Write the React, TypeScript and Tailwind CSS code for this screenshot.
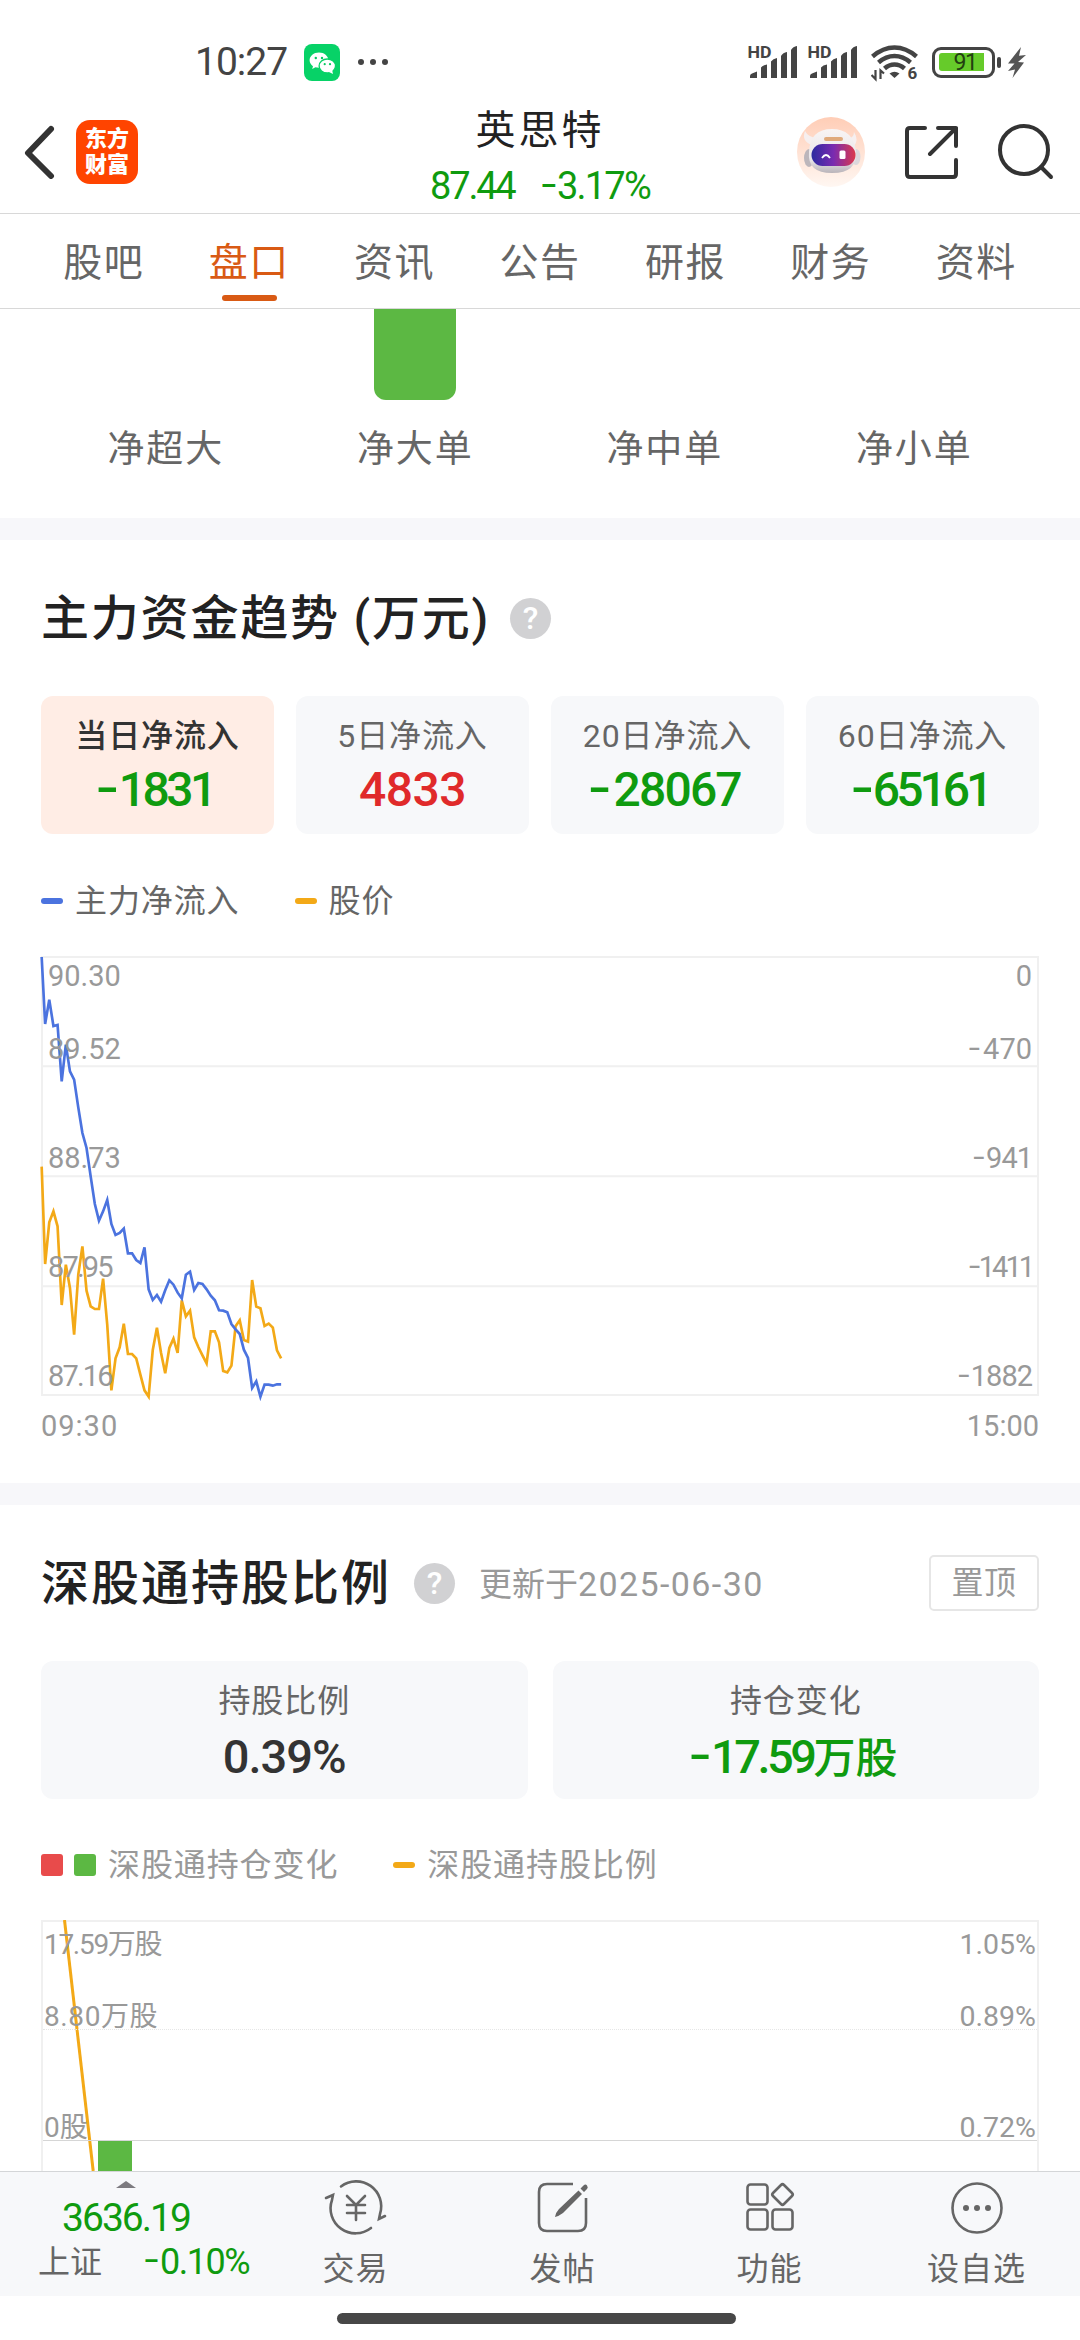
import React from "react";

const TABS = ["股吧", "盘口", "资讯", "公告", "研报", "财务", "资料"];

const ORDERS = [
  { label: "净超大", bar: false },
  { label: "净大单", bar: true },
  { label: "净中单", bar: false },
  { label: "净小单", bar: false },
];

const FLOWS = [
  { label: "当日净流入", value: "-1831", color: "text-[#0f9b0f] tracking-[-3.5px]", active: true },
  { label: "5日净流入", value: "4833", color: "text-[#e02a2a] tracking-[-0.5px]" },
  { label: "20日净流入", value: "-28067", color: "text-[#0f9b0f] tracking-[-1.8px]" },
  { label: "60日净流入", value: "-65161", color: "text-[#0f9b0f] tracking-[-4px]" },
];

// one sample per trading minute, in thirds of a pixel
const INFLOW = [
  77, 278, 205, 284, 281, 450, 340, 420, 445, 528, 605, 650, 735, 818, 868, 840, 806, 878, 911, 905,
  892, 966, 966, 986, 995, 948, 1074, 1106, 1091, 1111, 1077, 1047, 1060, 1084, 1101, 1030, 1021,
  1076, 1055, 1058, 1074, 1093, 1107, 1137, 1138, 1143, 1178, 1194, 1208, 1255, 1280, 1370, 1350,
  1396, 1360, 1360, 1363, 1359, 1359,
];
const PRICE = [
  706, 998, 873, 840, 885, 1121, 1000, 1070, 1210, 1030, 945, 1078, 1125, 1133, 1133, 1042, 1180,
  1377, 1281, 1248, 1177, 1268, 1268, 1281, 1330, 1377, 1396, 1256, 1189, 1265, 1326, 1250, 1222,
  1265, 1107, 1155, 1138, 1218, 1247, 1272, 1296, 1200, 1200, 1233, 1319, 1323, 1303, 1185, 1167,
  1226, 1231, 1046, 1126, 1131, 1184, 1177, 1189, 1257, 1281,
];

const toPoints = (values: number[]) =>
  values.map((v, i) => `${Math.max(2, i * 12.42).toFixed(1)},${v}`).join(" ");

// negative numbers get a wider, slightly raised minus
function Num({ value }: { value: string }) {
  if (!value.startsWith("-")) return <>{value}</>;
  return (
    <>
      <span className="mr-[0.1em] inline-block origin-right -translate-y-[0.05em] scale-x-[1.4]">-</span>
      {value.slice(1)}
    </>
  );
}

function Signal() {
  return (
    <svg width="54" height="44" viewBox="-2 -5 54 44" fill="#444">
      <text x="-0.5" y="13" fontSize="16" fontWeight="700" textLength="24" lengthAdjust="spacingAndGlyphs">
        HD
      </text>
      <path d="M2 33v-2q0-2 2-2.500l5-2v6.500ZM13 33V22.500q2-2.500 6-3v13.500ZM23 33V16.500q2-3 6-3.500v20ZM33 33V11q2-3.500 6-4v26ZM43 33V5q2-3.500 6-4v32Z" />
    </svg>
  );
}

function StatusBar() {
  return (
    <div className="flex h-[100px] items-center pt-6 pl-[195px] text-[#444]">
      <span className="w-[109px] text-[39px] leading-[40px] tracking-[-1px]">10:27</span>
      <svg width="36" height="37" viewBox="0 0 36 37">
        <rect width="36" height="37" rx="8" fill="#07d267" />
        <path d="M15 8.500C9.800 8.500 5.600 12 5.600 16.300c0 2.400 1.300 4.500 3.400 5.900L8.200 25l3.200-1.700c1.100.3 2.300.5 3.600.5 5.200 0 9.400-3.400 9.400-7.600S20.200 8.500 15 8.500Z" fill="#fff" />
        <ellipse cx="23.300" cy="22" rx="8.200" ry="7" fill="#fff" stroke="#07d267" strokeWidth="1.300" />
        <path d="m25 28 4 2-.8-3.500Z" fill="#fff" />
        <g fill="#07c862">
          <circle cx="11.800" cy="14" r="1.200" />
          <circle cx="18" cy="14" r="1.200" />
          <circle cx="20.700" cy="20.200" r="1.100" />
          <circle cx="26" cy="20.200" r="1.100" />
        </g>
      </svg>
      <div className="ml-[18px] flex gap-[6px]">
        <i className="size-[6px] rounded-full bg-[#444]" />
        <i className="size-[6px] rounded-full bg-[#444]" />
        <i className="size-[6px] rounded-full bg-[#444]" />
      </div>
      <div className="ml-[358px] flex items-center gap-[6px]">
        <Signal />
        <Signal />
        <svg width="52" height="44" viewBox="0 -4 52 44" className="ml-[5px]" fill="none" stroke="#444" strokeWidth="4.500">
          <path d="M1.500 12.500Q12 3.500 23.500 3.500T45.500 12.500" />
          <path d="M7.500 18.500Q15 12 23.500 12T39.500 18.500" />
          <path d="M13.500 24.500Q18 20.500 23.500 20.500T33.500 24.500" />
          <path d="M18.500 29.500Q23.500 26 28.500 29.500L23.500 34Z" fill="#444" stroke="none" />
          <path d="M4.500 26v9L.5 31M9.500 35v-8.500l3.500 3" strokeWidth="2.200" />
          <text x="36.500" y="35" fontSize="17" fontWeight="700" fill="#444" stroke="none">6</text>
        </svg>
        <div className="ml-[3px] flex items-center">
          <div className="h-[31px] w-[63px] rounded-[9px] border-[3px] border-[#444] p-[3.500px]">
            <div className="flex h-full w-[45px] items-center justify-center rounded-l-[3px] bg-[#66cb2a] pl-2 text-[23px] leading-none tracking-[-1.500px] text-[#234011]">
              91
            </div>
          </div>
          <i className="ml-[2px] h-[11px] w-[4px] rounded-[2px] bg-[#444]" />
        </div>
      </div>
      <svg width="18" height="31" viewBox="0 0 18 31" className="ml-[7px]" fill="#555">
        <path d="M13 0 0 16.500h6.500L0 24l7-1.500L4.500 31 16 15.500l-6-.5L18 8l-7 .8Z" />
      </svg>
    </div>
  );
}

function Robot() {
  return (
    <svg width="68" height="70" viewBox="0 0 68 70">
      <defs>
        <linearGradient id="halo" x1="0" y1="0" x2="0" y2="1">
          <stop offset="0" stopColor="#ffcdb6" />
          <stop offset="1" stopColor="#fff7f2" />
        </linearGradient>
        <linearGradient id="visor">
          <stop offset="0" stopColor="#2c2aa0" />
          <stop offset="0.500" stopColor="#7a2bb0" />
          <stop offset="1" stopColor="#dc3a4c" />
        </linearGradient>
        <linearGradient id="shell" x1="0" y1="0" x2="0" y2="1">
          <stop offset="0" stopColor="#f8f4f4" />
          <stop offset="0.700" stopColor="#e9e5e8" />
          <stop offset="1" stopColor="#b9b3b9" />
        </linearGradient>
      </defs>
      <ellipse cx="34" cy="35" rx="34" ry="35" fill="url(#halo)" />
      <path d="M15 28Q4 24 8 14q3 6 12 7ZM50 22q7-1 7-7 5 8 0 14Z" fill="#f6efef" />
      <ellipse cx="12" cy="41" rx="5" ry="9" fill="#bcb6bb" />
      <ellipse cx="59" cy="40" rx="4.500" ry="8" fill="#dcd8dc" />
      <path d="M12 35Q13 12 35 12q21 0 24 22 2 22-24 22Q10 56 12 35Z" fill="url(#shell)" />
      <rect x="27" y="20" width="19" height="4" rx="2" fill="#e0aa7c" />
      <rect x="14.500" y="27" width="44" height="22" rx="11" fill="url(#visor)" />
      <path d="M25 41q4-6 8 0" fill="none" stroke="#fff" strokeWidth="1.800" />
      <rect x="42.500" y="33.500" width="6" height="8.500" rx="1.500" fill="#fff" />
    </svg>
  );
}

function Header() {
  return (
    <div className="flex h-[114px] items-center border-b-[1px] border-[#d8d8d8] pr-[26px] pl-[23px]">
      <div className="mb-[9px] flex w-[260px] items-center">
        <svg width="32" height="54" viewBox="0 0 32 54" fill="none" stroke="#333" strokeWidth="6" strokeLinecap="round" strokeLinejoin="round">
          <path d="M28 4 5 28l23 23" />
        </svg>
        <div className="ml-[21px] flex h-[64px] w-[62px] flex-col items-center justify-center rounded-[14px] bg-[#ff4400] text-[22px] leading-[26px] font-black text-white">
          <span>东方</span>
          <span>财富</span>
        </div>
      </div>
      <div className="flex flex-1 flex-col items-center">
        <div className="mt-[3px] text-[40px] leading-[54px] tracking-[3px] text-[#222]">英思特</div>
        <div className="mt-[2px] flex gap-[30px] text-[38px] leading-[52px] text-[#0f9b0f]">
          <span className="tracking-[-2.200px]">87.44</span>
          <span className="tracking-[-1.800px]">
            <Num value="-3.17%" />
          </span>
        </div>
      </div>
      <div className="mb-[9px] flex items-center">
        <Robot />
        <svg width="54" height="54" viewBox="0 0 54 54" className="ml-[39px]" fill="none" stroke="#333" strokeWidth="4" strokeLinecap="round" strokeLinejoin="round">
          <path d="M21 3H6Q3 3 3 6v43q0 3 3 3h43q3 0 3-3V35" />
          <path d="M34 3h18v18M52 3 26 29" />
        </svg>
        <svg width="58" height="58" viewBox="0 0 58 58" className="ml-[38px]" fill="none" stroke="#333" strokeWidth="4" strokeLinecap="round">
          <circle cx="28" cy="27" r="24" />
          <path d="m45 44 10 10" />
        </svg>
      </div>
    </div>
  );
}

function Help() {
  return (
    <span className="flex size-[41px] items-center justify-center rounded-full bg-[#d1d1d3] text-[32px] leading-none font-medium text-white">
      ?
    </span>
  );
}

function Dash({ color }: { color: string }) {
  return <i className={`h-[6px] w-[22px] rounded-full ${color}`} />;
}

function FlowChart() {
  const rows = [
    ["89.52", "-470"],
    ["88.73", "-941"],
    ["87.95", "-1411"],
    ["87.16", "-1882"],
  ];
  return (
    <div className="mt-[35px] text-[29px] leading-[36px] text-[#999]">
      <div className="relative h-[440px] border-2 border-[#f0f0f0]">
        <svg className="absolute -top-[1px] -left-[2px] overflow-visible" width="998" height="439" viewBox="0 77 2994 1317" fill="none" strokeWidth="8">
          <path d="M0 405h2994M0 735h2994M0 1065h2994" stroke="#f0f0f0" strokeWidth="6" />
          <polyline points={toPoints(PRICE)} stroke="#f3a917" />
          <polyline points={toPoints(INFLOW)} stroke="#4b73df" />
        </svg>
        <div className="relative flex h-full flex-col">
          {rows.map(([left, right], i) => (
            <div key={left} className="flex flex-1 flex-col justify-between px-[5px]">
              <div className="flex justify-between">
                {i === 0 && (
                  <>
                    <span>90.30</span>
                    <span>0</span>
                  </>
                )}
              </div>
              <div className="flex justify-between">
                <span className={i > 1 ? "tracking-[-1.800px]" : ""}>{left}</span>
                <span className={i === 2 ? "tracking-[-3px]" : i === 0 ? "" : "tracking-[-1px]"}>
                  <Num value={right} />
                </span>
              </div>
            </div>
          ))}
        </div>
      </div>
      <div className="mt-[12px] flex justify-between">
        <span className="tracking-[1px]">09:30</span>
        <span>15:00</span>
      </div>
    </div>
  );
}

function HoldingChart() {
  return (
    <div className="relative mt-[35px] h-[260px] border-2 border-[#f0f0f0] text-[28px] leading-[28px] text-[#999]">
      <svg className="absolute -top-[2px] -left-[2px]" width="998" height="260" viewBox="0 0 998 260">
        <rect x="57" y="220" width="34" height="40" fill="#5cb843" />
        <path d="m23.500 0 28.700 251" stroke="#f3a917" strokeWidth="3" />
      </svg>
      <div className="relative">
        <div className="flex h-[108px] flex-col justify-between border-b border-dotted border-[#e6e6e6] px-[1px] pt-[9px]">
          <div className="flex justify-between">
            <span className="tracking-[-1.300px]">17.59万股</span>
            <span className="text-[28.5px]">1.05%</span>
          </div>
          <div className="-mb-[2px] flex justify-between">
            <span className="tracking-[0.600px]">8.80万股</span>
            <span className="text-[28.5px]">0.89%</span>
          </div>
        </div>
        <div className="flex h-[111px] items-end border-b-[1px] border-[#d6d6d6] px-[1px]">
          <div className="-mb-[2px] flex w-full justify-between">
            <span>0股</span>
            <span className="text-[28.5px]">0.72%</span>
          </div>
        </div>
      </div>
    </div>
  );
}

function BottomBar() {
  const icon = "h-[60px] w-[64px]";
  const items = [
    {
      label: "交易",
      svg: (
        <svg className={icon} viewBox="0 0 64 60" fill="none" stroke="#666" strokeWidth="2.600" strokeLinecap="round">
          <path d="M17 8.500A25 25 0 0 1 56 36l-1 5 6-3" />
          <path d="M47 50A25 25 0 0 1 8 22l1-5-7 3" />
          <path d="m23 18 9 9 9-9M32 27v15M23 27h18M23 35h18" />
        </svg>
      ),
    },
    {
      label: "发帖",
      svg: (
        <svg className={icon} viewBox="0 0 64 60" fill="none" stroke="#666" strokeWidth="2.600">
          <path d="M42 6H16q-8 0-8 8v31q0 8 8 8h31q8 0 8-8V20" />
          <path d="M47.500 12.500 51 16 32 35q-4 3-8 4 1-5 4-8ZM49.500 10.500l3-3q2-2 3.500 0t0 3.500l-3 3Z" fill="#666" stroke="none" />
        </svg>
      ),
    },
    {
      label: "功能",
      svg: (
        <svg className={icon} viewBox="0 0 64 60" fill="none" stroke="#666" strokeWidth="2.600" strokeLinejoin="round">
          <rect x="9.500" y="6.500" width="20" height="20" rx="3" />
          <rect x="9.500" y="31.500" width="20" height="20" rx="3" />
          <rect x="34.500" y="31.500" width="20" height="20" rx="3" />
          <path d="m43 7-8 8q-1.500 1.500 0 3l8 8q1.500 1.500 3 0l8-8q1.500-1.500 0-3l-8-8q-1.500-1.500-3 0Z" />
        </svg>
      ),
    },
    {
      label: "设自选",
      svg: (
        <svg className={icon} viewBox="0 0 64 60" fill="none" stroke="#666" strokeWidth="2.600">
          <circle cx="32" cy="30" r="24.500" />
          <g fill="#666" stroke="none">
            <circle cx="21" cy="30" r="3" />
            <circle cx="32" cy="30" r="3" />
            <circle cx="43" cy="30" r="3" />
          </g>
        </svg>
      ),
    },
  ];
  return (
    <div className="flex h-[125px] border-t border-[#d4d6d8] bg-[#f7f8fa]">
      <div className="flex w-[252px] flex-col items-center pt-[9px]">
        <svg width="20" height="7" viewBox="0 0 20 7" fill="#7d7b80">
          <path d="M0 7 10 0l10 7Z" />
        </svg>
        <div className="mt-[8px] text-[39px] leading-[44px] tracking-[-2px] text-[#0f9b0f]">3636.19</div>
        <div className="flex w-full items-center pl-[38px] text-[32px] leading-[44px]">
          <span className="text-[#666]">上证</span>
          <span className="ml-[46px] text-[36px] tracking-[-1.500px] text-[#0f9b0f]">
            <Num value="-0.10%" />
          </span>
        </div>
      </div>
      <div className="flex flex-1">
        {items.map((it) => (
          <div key={it.label} className="flex flex-1 flex-col items-center pt-[6px]">
            {it.svg}
            <span className="mt-[11px] text-[32px] leading-[40px] tracking-[1px] text-[#666]">{it.label}</span>
          </div>
        ))}
      </div>
    </div>
  );
}

export default function App() {
  return (
    <div className="flex h-[2340px] w-[1080px] flex-col overflow-hidden bg-white font-['Roboto','Noto_Sans_CJK_SC',sans-serif]">
      <StatusBar />
      <Header />
      <div className="flex h-[95px] border-b-[1px] border-[#d8d8d8] px-[31px]">
        {TABS.map((tab) => {
          const active = tab === "盘口";
          return (
            <div key={tab} className="flex flex-1 flex-col items-center pt-[24px]">
              <span className={`text-[39px] leading-[50px] tracking-[1.500px] ${active ? "text-[#d95a14]" : "text-[#666]"}`}>{tab}</span>
              {active && <i className="mt-[7px] h-[6px] w-[55px] rounded-full bg-[#d95a14]" />}
            </div>
          );
        })}
      </div>

      <div className="flex h-[209px] px-[41px]">
        {ORDERS.map((o) => (
          <div key={o.label} className="flex flex-1 flex-col items-center">
            <div className={`h-[91px] w-[82px] rounded-b-[12px] ${o.bar ? "bg-[#5cb843]" : ""}`} />
            <span className="mt-[25px] text-[37px] leading-[50px] tracking-[1.800px] text-[#666]">{o.label}</span>
          </div>
        ))}
      </div>
      <div className="h-[22px] bg-[#f7f7fa]" />

      <section className="h-[943px] px-[41px] pt-[49px]">
        <div className="flex items-center">
          <h2 className="text-[48px] leading-[60px] font-medium tracking-[1.800px] whitespace-pre text-[#222]">主力资金趋势 (万元)</h2>
          <div className="mb-[2px] ml-[20px]">
            <Help />
          </div>
        </div>
        <div className="mt-[47px] grid grid-cols-4 gap-[22px]">
          {FLOWS.map((f) => (
            <div key={f.label} className={`flex h-[138px] flex-col items-center rounded-[12px] pt-[19px] ${f.active ? "bg-[#ffede5]" : "bg-[#f7f8fa]"}`}>
              <span className={`text-[32px] leading-[42px] tracking-[0.900px] ${f.active ? "font-medium text-[#333]" : "text-[#666]"}`}>{f.label}</span>
              <span className={`mt-[7px] text-[48px] leading-[52px] font-medium ${f.color}`}>
                <Num value={f.value} />
              </span>
            </div>
          ))}
        </div>
        <div className="mt-[46px] flex h-[41px] items-center text-[32px] tracking-[0.900px] text-[#666]">
          <Dash color="bg-[#4b73df]" />
          <span className="ml-[12px]">主力净流入</span>
          <span className="ml-[55px] flex items-center">
            <Dash color="bg-[#f3a917]" />
          </span>
          <span className="ml-[12px]">股价</span>
        </div>
        <FlowChart />
      </section>
      <div className="h-[22px] shrink-0 bg-[#f7f7fa]" />

      <section className="h-[666px] shrink-0 overflow-hidden px-[41px] pt-[49px]">
        <div className="flex h-[60px] items-center">
          <h2 className="text-[48px] leading-[60px] font-medium tracking-[2px] text-[#222]">深股通持股比例</h2>
          <div className="mb-[2px] ml-[23px]">
            <Help />
          </div>
          <span className="ml-[24px] text-[33px] text-[#999]">
            更新于<span className="text-[34px] tracking-[1.400px]">2025-06-30</span>
          </span>
          <span className="mb-[2px] ml-auto flex h-[56px] w-[110px] items-center justify-center rounded-[5px] border-2 border-[#e6e6e6] text-[32px] tracking-[0.500px] text-[#999]">
            置顶
          </span>
        </div>
        <div className="mt-[47px] grid grid-cols-2 gap-[25px]">
          <div className="flex h-[138px] flex-col items-center rounded-[12px] bg-[#f7f8fa] pt-[19px]">
            <span className="text-[32px] leading-[42px] tracking-[0.900px] text-[#666]">持股比例</span>
            <span className="mt-[9px] text-[47px] leading-[52px] font-medium tracking-[-1px] text-[#333]">0.39%</span>
          </div>
          <div className="flex h-[138px] flex-col items-center rounded-[12px] bg-[#f7f8fa] pt-[19px]">
            <span className="text-[32px] leading-[42px] tracking-[0.900px] text-[#666]">持仓变化</span>
            <span className="mt-[9px] text-[47px] leading-[52px] font-medium tracking-[-3.500px] text-[#0f9b0f]">
              <Num value="-17.59" />
              <span className="text-[42px] tracking-normal">万股</span>
            </span>
          </div>
        </div>
        <div className="mt-[46px] flex h-[40px] items-center text-[32px] tracking-[0.900px] text-[#999]">
          <i className="size-[22px] rounded-[3px] bg-[#e84b4b]" />
          <i className="ml-[11px] size-[22px] rounded-[3px] bg-[#5cb843]" />
          <span className="ml-[12px]">深股通持仓变化</span>
          <span className="ml-[55px] flex items-center">
            <Dash color="bg-[#f3a917]" />
          </span>
          <span className="ml-[12px]">深股通持股比例</span>
        </div>
        <HoldingChart />
      </section>

      <BottomBar />
      <div className="flex h-[44px] justify-center pt-[17px] pr-[7px]">
        <i className="h-[11px] w-[399px] rounded-full bg-[#474747]" />
      </div>
    </div>
  );
}
